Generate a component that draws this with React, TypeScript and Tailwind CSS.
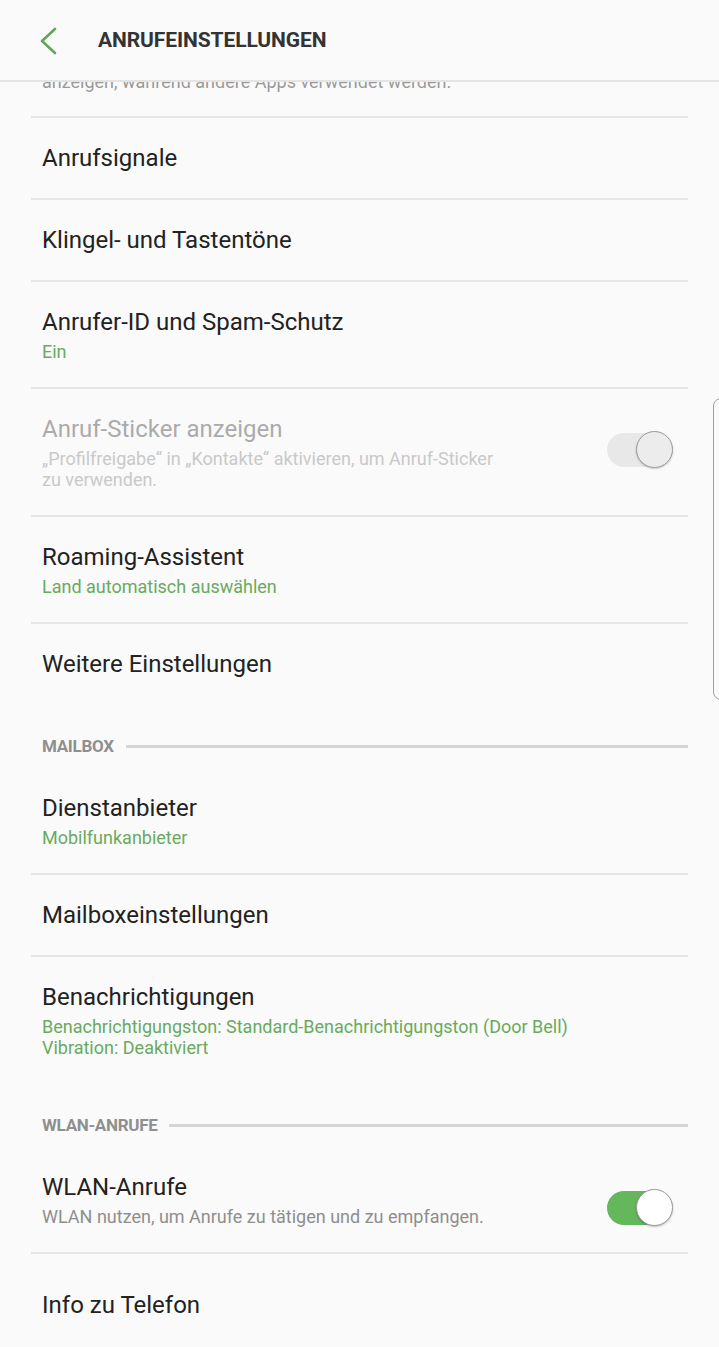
import React from "react";

type RowProps = {
  title: string;
  lines?: string[];
  tone?: "green" | "gray" | "disabled";
  toggle?: "on" | "disabled";
  divider?: boolean;
};

const Toggle = ({ state }: { state: "on" | "disabled" }) => {
  const on = state === "on";
  return (
    <div className="relative w-[66px] h-[36px] shrink-0">
      <div
        className={
          on
            ? "absolute left-0 top-[1px] w-[56px] h-[34px] rounded-full bg-[#64b75a]"
            : "absolute left-0 top-[1px] w-[56px] h-[34px] rounded-full bg-[#e8e8e8]"
        }
      />
      <div
        className={
          on
            ? "absolute right-0 top-[-1px] w-[37px] h-[37px] rounded-full bg-white border border-[#9a9a9a] shadow-[0_1px_2px_rgba(0,0,0,0.25)]"
            : "absolute right-0 top-[-1px] w-[37px] h-[37px] rounded-full bg-[#ececec] border border-[#9a9a9a] shadow-[0_1px_2px_rgba(0,0,0,0.2)]"
        }
      />
    </div>
  );
};

const Row = ({ title, lines = [], tone = "green", toggle, divider = true }: RowProps) => {
  const disabled = tone === "disabled";
  const subColor =
    tone === "green"
      ? "text-[#68ab5d]"
      : tone === "gray"
      ? "text-[#8e8e8e]"
      : "text-[#c9c9c9]";
  return (
    <div
      className={
        divider
          ? "flex items-center border-t-2 border-[#e6e6e6] pl-[11px] pr-[15px] pt-[25px] pb-[25px]"
          : "flex items-center pl-[11px] pr-[15px] pt-[27px] pb-[25px]"
      }
    >
      <div className="flex-1 min-w-0">
        <div
          className={
            disabled
              ? "text-[24px] leading-[30px] text-[#ababab]"
              : "text-[24px] leading-[30px] text-[#222222]"
          }
        >
          {title}
        </div>
        {lines.length > 0 && (
          <div className={`mt-[4px] text-[18px] leading-[21px] ${subColor}`}>
            {lines.map((l) => (
              <div key={l}>{l}</div>
            ))}
          </div>
        )}
      </div>
      {toggle && (
        <div className="self-start mt-[18px]">
          <Toggle state={toggle} />
        </div>
      )}
    </div>
  );
};

const Section = ({ label }: { label: string }) => (
  <div className="flex items-center gap-[12px] pl-[11px] pt-[31px] pb-[9px]">
    <span className="text-[17px] leading-[22px] font-bold text-[#8f8f8f] tracking-[-0.3px]">
      {label}
    </span>
    <div className="flex-1 h-[3px] bg-[#d5d5d5]" />
  </div>
);

export default function App() {
  return (
    <div
      className="relative w-[719px] h-[1347px] overflow-hidden bg-[#fafafa]"
      style={{ fontFamily: "Roboto, 'Noto Sans', sans-serif" }}
    >
      <header className="relative z-10 flex items-center h-[82px] pt-[2px] bg-[#fafafa] border-b-2 border-[#e4e4e4]">
        <svg width="18" height="28" viewBox="0 0 18 28" className="ml-[39px]">
          <polyline
            points="16,2 3,14 16,26"
            fill="none"
            stroke="#5ea857"
            strokeWidth="2.6"
            strokeLinecap="round"
            strokeLinejoin="round"
          />
        </svg>
        <h1 className="ml-[41px] text-[21px] font-bold text-[#333333] tracking-[-0.1px]">
          ANRUFEINSTELLUNGEN
        </h1>
      </header>

      <div className="mx-[31px]">
        <div className="h-[34px] overflow-hidden pl-[11px]">
          <div className="mt-[-11px] text-[18px] leading-[21px] text-[#9a9a9a]">
            anzeigen, während andere Apps verwendet werden.
          </div>
        </div>

        <Row title="Anrufsignale" />
        <Row title="Klingel- und Tastentöne" />
        <Row title="Anrufer-ID und Spam-Schutz" lines={["Ein"]} />
        <Row
          title="Anruf-Sticker anzeigen"
          tone="disabled"
          toggle="disabled"
          lines={[
            "„Profilfreigabe“ in „Kontakte“ aktivieren, um Anruf-Sticker",
            "zu verwenden.",
          ]}
        />
        <Row title="Roaming-Assistent" lines={["Land automatisch auswählen"]} />
        <Row title="Weitere Einstellungen" />

        <Section label="MAILBOX" />
        <Row title="Dienstanbieter" lines={["Mobilfunkanbieter"]} divider={false} />
        <Row title="Mailboxeinstellungen" />
        <Row
          title="Benachrichtigungen"
          lines={[
            "Benachrichtigungston: Standard-Benachrichtigungston (Door Bell)",
            "Vibration: Deaktiviert",
          ]}
        />

        <Section label="WLAN-ANRUFE" />
        <Row
          title="WLAN-Anrufe"
          tone="gray"
          toggle="on"
          lines={["WLAN nutzen, um Anrufe zu tätigen und zu empfangen."]}
          divider={false}
        />
        <div className="border-t-2 border-[#e6e6e6] pl-[11px] pt-[36px] pb-[30px]">
          <div className="text-[24px] leading-[30px] text-[#222222]">Info zu Telefon</div>
        </div>
      </div>

      <div className="absolute left-[713px] top-[398px] w-[20px] h-[302px] rounded-[8px] border-[1.5px] border-[#a0a0a0]" />
    </div>
  );
}
